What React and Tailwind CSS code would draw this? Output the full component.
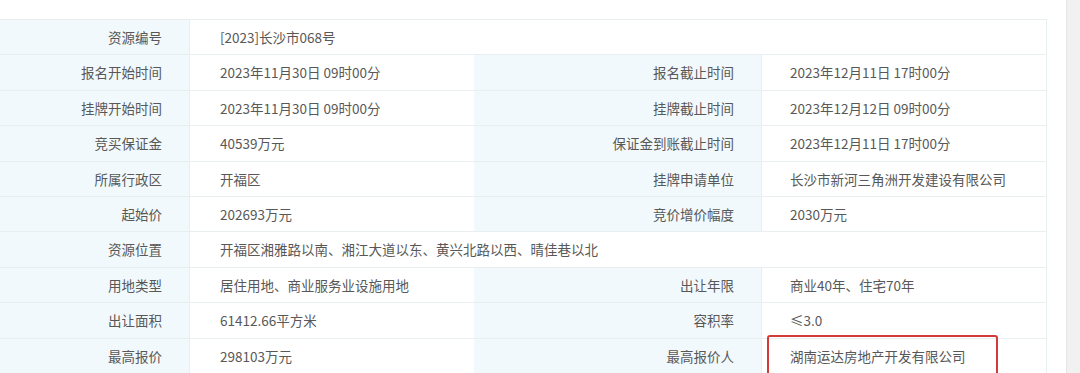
import React from "react";

const rows = [
  { label: "资源编号", value: "[2023]长沙市068号", full: true },
  { label: "报名开始时间", value: "2023年11月30日 09时00分", label2: "报名截止时间", value2: "2023年12月11日 17时00分" },
  { label: "挂牌开始时间", value: "2023年11月30日 09时00分", label2: "挂牌截止时间", value2: "2023年12月12日 09时00分" },
  { label: "竞买保证金", value: "40539万元", label2: "保证金到账截止时间", value2: "2023年12月11日 17时00分" },
  { label: "所属行政区", value: "开福区", label2: "挂牌申请单位", value2: "长沙市新河三角洲开发建设有限公司" },
  { label: "起始价", value: "202693万元", label2: "竞价增价幅度", value2: "2030万元" },
  { label: "资源位置", value: "开福区湘雅路以南、湘江大道以东、黄兴北路以西、晴佳巷以北", full: true },
  { label: "用地类型", value: "居住用地、商业服务业设施用地", label2: "出让年限", value2: "商业40年、住宅70年" },
  { label: "出让面积", value: "61412.66平方米", label2: "容积率", value2: "≤3.0" },
  { label: "最高报价", value: "298103万元", label2: "最高报价人", value2: "湖南运达房地产开发有限公司", mark: true },
];

const App = () => {
  return (
    <div
      className="w-[1080px] h-[373px] overflow-hidden bg-white flex text-[13.5px] text-[#585858]"
      style={{ fontFamily: '"Noto Sans CJK SC", "Noto Sans", sans-serif' }}
    >
      <div className="w-[1047px] pt-[19px]">
        <div className="border-t border-r border-[#e9eef1]">
          {rows.map((r) => (
            <div key={r.label} className="grid grid-cols-[190px_284px_288px_284px] h-[35.4px] border-b border-[#e9eef1]">
              <div className="bg-[#f2f9fc] border-r border-[#e9eef1] flex items-center justify-end pr-[27px]">
                {r.label}
              </div>
              {r.full ? (
                <div className="col-span-3 flex items-center pl-[30px]">{r.value}</div>
              ) : (
                <>
                  <div className="flex items-center pl-[30px]">{r.value}</div>
                  <div className="bg-[#f2f9fc] border-r border-[#e9eef1] flex items-center justify-end pr-[27px]">
                    {r.label2}
                  </div>
                  <div className="relative flex items-center pl-[28px]">
                    {r.value2}
                    {r.mark && (
                      <div className="absolute left-[5px] -top-[4px] w-[231px] h-[48px] border-2 border-[#d33b3b] rounded-[3px]" />
                    )}
                  </div>
                </>
              )}
            </div>
          ))}
        </div>
      </div>
      <div className="w-[19px]" />
      <div className="w-[14px] h-full bg-[#f1f1f1] border-l border-[#e6e6e6]" />
    </div>
  );
};

export default App;
